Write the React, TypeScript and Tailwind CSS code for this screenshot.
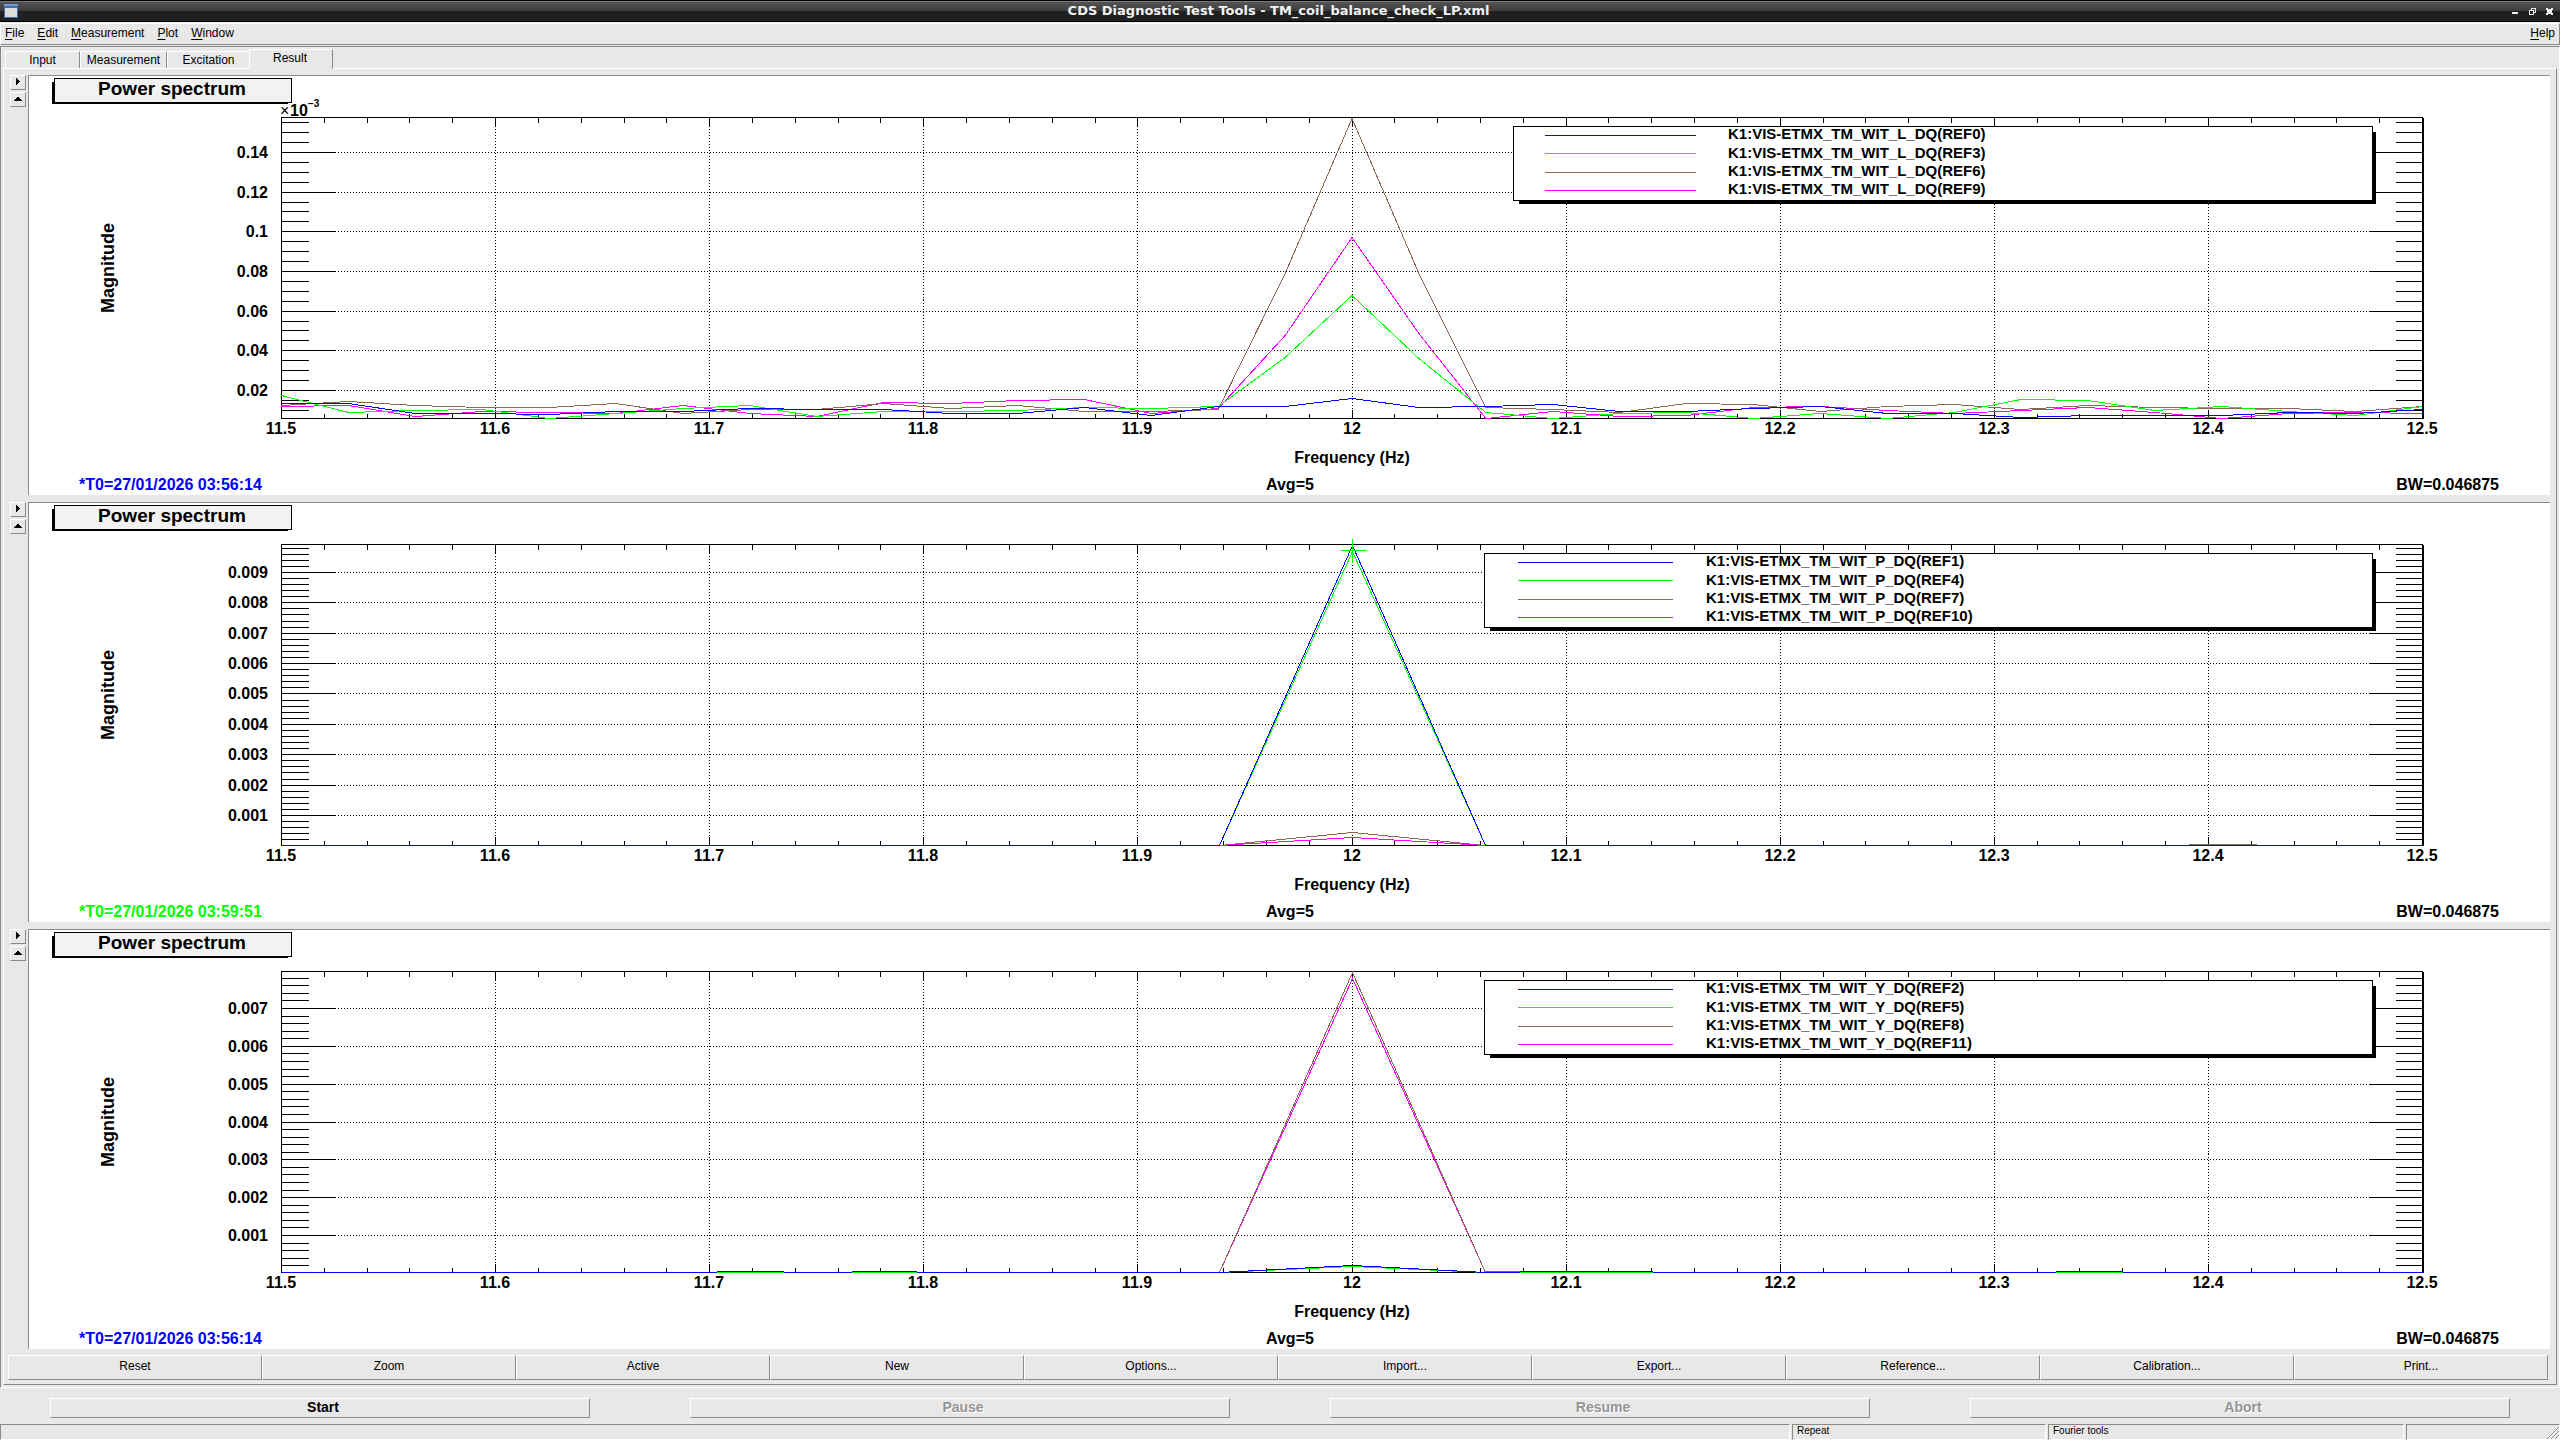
import React from "react";

type Series = { color: string; points: number[][] };

type Plot = {
  unit: string;
  first: number;
  step: number;
  minor: number;
  labels: string[];
  exponent?: boolean;
  t0: string;
  t0Class: string;
  legendX: number;
  lineX: number[];
  textX: number;
  legend: string[];
  series: Series[];
  marker?: number[];
};

const BLUE = "#0000ff";
const GREEN = "#00ff00";
const BROWN = "#8b6658";
const MAGENTA = "#ff00ff";
const COLORS = [BLUE, GREEN, BROWN, MAGENTA];

// Plot frame inside one pad
const LEFT = 253;
const RIGHT = 2394;
const TOP = 42;
const BOTTOM = 343;

// One reading for every frequency bin, 11.5 Hz to 12.5 Hz in steps of 1/32 Hz
const bins = (values: number[]) =>
  values.map((v, i) => [LEFT + ((RIGHT - LEFT) * i) / 32, v]);

// A single line at 12 Hz on a flat floor
const peak = (top: number, base = BOTTOM) => [
  [1191, base],
  [1324, top],
  [1457, base],
];

const floor = (from: number, to: number, y = BOTTOM) => [[from, y], [to, y]];

const plots: Plot[] = [
  {
    unit: "L",
    first: 315,
    step: 39.67,
    minor: 4,
    labels: ["0.02", "0.04", "0.06", "0.08", "0.1", "0.12", "0.14"],
    exponent: true,
    t0: "*T0=27/01/2026 03:56:14",
    t0Class: "fill-[#0000ff]",
    legendX: 1485,
    lineX: [1516, 1667],
    textX: 1700,
    legend: ["REF0", "REF3", "REF6", "REF9"],
    series: [
      {
        color: MAGENTA,
        points: bins([331, 330, 341, 336, 337, 338, 330, 338, 341, 327, 328, 325, 324, 338, 333, 260, 162, 258, 343,
          336, 341, 340, 332, 331, 335, 338, 335, 332, 337, 343, 338, 337, 338]),
      },
      {
        color: BROWN,
        points: bins([330, 326, 330, 332, 332, 328, 338, 334, 334, 328, 333, 330, 336, 336, 334, 198, 43, 198, 332,
          334, 337, 328, 329, 336, 331, 329, 334, 330, 332, 333, 333, 336, 331]),
      },
      {
        color: GREEN,
        points: bins([320, 337, 335, 334, 343, 338, 333, 330, 341, 336, 336, 335, 332, 333, 331, 282, 220, 283, 337,
          343, 338, 337, 343, 338, 343, 337, 324, 325, 335, 331, 336, 340, 331]),
      },
      {
        color: BLUE,
        points: bins([328, 328, 338, 338, 339, 336, 336, 333, 334, 334, 338, 338, 332, 340, 331, 331, 323, 332, 331,
          329, 336, 336, 333, 331, 338, 338, 342, 340, 340, 340, 337, 338, 334]),
      },
    ],
  },
  {
    unit: "P",
    first: 313,
    step: 30.38,
    minor: 5,
    labels: ["0.001", "0.002", "0.003", "0.004", "0.005", "0.006", "0.007", "0.008", "0.009"],
    t0: "*T0=27/01/2026 03:59:51",
    t0Class: "fill-[#00ff00]",
    legendX: 1456,
    lineX: [1489, 1644],
    textX: 1678,
    legend: ["REF1", "REF4", "REF7", "REF10"],
    series: [
      { color: BROWN, points: peak(330) },
      { color: MAGENTA, points: peak(335) },
      { color: BROWN, points: floor(2160, 2228, 342) },
      { color: GREEN, points: peak(49) },
      { color: BLUE, points: peak(43) },
      { color: BLUE, points: floor(LEFT, 1191) },
      { color: BLUE, points: floor(1457, RIGHT) },
    ],
    marker: [1324, 48],
  },
  {
    unit: "Y",
    first: 306,
    step: 37.83,
    minor: 5,
    labels: ["0.001", "0.002", "0.003", "0.004", "0.005", "0.006", "0.007"],
    t0: "*T0=27/01/2026 03:56:14",
    t0Class: "fill-[#0000ff]",
    legendX: 1456,
    lineX: [1489, 1644],
    textX: 1678,
    legend: ["REF2", "REF5", "REF8", "REF11"],
    series: [
      { color: MAGENTA, points: peak(49) },
      { color: BROWN, points: peak(43) },
      { color: MAGENTA, points: floor(1457, 1491, 342) },
      { color: GREEN, points: peak(337) },
      { color: BLUE, points: peak(336) },
      { color: BLUE, points: floor(LEFT, 1191) },
      { color: BLUE, points: floor(1447, RIGHT) },
      ...[[688, 755], [823, 888], [1491, 1624], [2027, 2094]].flatMap(([from, to]) => [
        { color: GREEN, points: floor(from, to) },
        { color: BLUE, points: floor(from, to, 342) },
      ]),
    ],
  },
];

const line = (x1: number, y1: number, x2: number, y2: number) => `M${x1} ${y1}L${x2} ${y2}`;

function Axes({ plot }: { plot: Plot }) {
  const ticks: string[] = [];
  const grid: string[] = [];

  for (let i = 1; i < 50; i++) {
    const x = Math.round(LEFT + ((RIGHT - LEFT) * i) / 50);
    const major = i % 5 === 0;
    const len = major ? 9 : 5;
    ticks.push(line(x, TOP, x, TOP + len), line(x, BOTTOM, x, BOTTOM - len));
    if (major) grid.push(line(x, TOP + 11, x, BOTTOM - 10));
  }

  for (let i = 1 - plot.minor; ; i++) {
    const y = Math.round(plot.first - (plot.step * i) / plot.minor);
    if (y <= TOP + 1) break;
    if (y >= BOTTOM - 1) continue;
    const major = i % plot.minor === 0;
    ticks.push(line(LEFT, y, LEFT + (major ? 54 : 27), y), line(RIGHT - (major ? 54 : 27), y, RIGHT, y));
    if (major) grid.push(line(LEFT + 56, y, RIGHT - 55, y));
  }

  return (
    <>
      <path d={grid.join("")} stroke="#000" strokeDasharray="1 2"/>
      <path d={ticks.join("")} stroke="#000"/>
      <rect x={LEFT} y={TOP} width={RIGHT - LEFT} height={BOTTOM - TOP} stroke="#000"/>
      <path d={line(RIGHT + 1, TOP, RIGHT + 1, BOTTOM)} stroke="#000"/>
    </>
  )
}

function Spectrum({ plot }: { plot: Plot }) {
  return (
    <svg className="block w-full h-auto bg-white font-bold text-[16px]" viewBox="1 1 2521 419" fill="none"
         xmlns="http://www.w3.org/2000/svg" role="img" aria-label="Power spectrum">
      <g transform="translate(.5 .5)" shapeRendering="crispEdges">
        <Axes plot={plot}/>
        {plot.series.map((s, i) => (
          <polyline key={i} points={s.points.map((p) => p.join(",")).join(" ")} stroke={s.color}/>
        ))}
        {plot.marker && (
          <path d={`M${plot.marker[0] - 12} ${plot.marker[1]}h25M${plot.marker[0]} ${plot.marker[1] - 12}v24`}
                stroke={GREEN}/>
        )}

        {/* Title box */}
        <rect x="23" y="6" width="236" height="22" fill="#000"/>
        <rect x="26" y="3" width="237" height="24" fill="#f2f2f2" stroke="#000"/>

        {/* Legend box */}
        <rect x={plot.legendX + 5} y="56" width={2342 - plot.legendX} height="72" fill="#000"/>
        <rect x={plot.legendX} y="51" width={2344 - plot.legendX} height="74" fill="#fff" stroke="#000"/>
        {COLORS.map((color, i) => (
          <path key={color} d={line(plot.lineX[0], [60, 78, 97, 115][i], plot.lineX[1], [60, 78, 97, 115][i])}
                stroke={color}/>
        ))}
      </g>

      <g className="fill-black">
        <text className="text-[19px]" x="144" y="20" textAnchor="middle">Power spectrum</text>
        {plot.legend.map((ref, i) => (
          <text key={ref} className="text-[15px]" x={plot.textX} y={[64, 83, 101, 119][i]}>
            {`K1:VIS-ETMX_TM_WIT_${plot.unit}_DQ(${ref})`}
          </text>
        ))}
        {plot.exponent && (
          <>
            <text className="font-normal" x="252" y="41">×</text>
            <text x="262" y="41">10</text>
            <text className="text-[10px]" x="280" y="32">−3</text>
          </>
        )}
        {plot.labels.map((label, i) => (
          <text key={label} x="240" y={Math.round(plot.first - plot.step * i) + 6} textAnchor="end">{label}</text>
        ))}
        {["11.5", "11.6", "11.7", "11.8", "11.9", "12", "12.1", "12.2", "12.3", "12.4", "12.5"].map((label, i) => (
          <text key={label} x={Math.round(LEFT + ((RIGHT - LEFT) * i) / 10)} y="359" textAnchor="middle">{label}</text>
        ))}
        <text className="text-[18px]" transform="translate(86 193) rotate(-90)" textAnchor="middle">Magnitude</text>
        <text x="1324" y="388" textAnchor="middle">Frequency (Hz)</text>
        <text x="1238" y="415">Avg=5</text>
        <text x="2471" y="415" textAnchor="end">BW=0.046875</text>
        <text className={plot.t0Class} x="51" y="415">{plot.t0}</text>
      </g>
    </svg>
  )
}

function PadButton({ label, d }: { label: string; d: string }) {
  return (
    <button type="button" aria-label={label}
            className="w-4 h-[15px] pb-px flex items-center justify-center border border-t-white border-l-white border-r-[#8a8a8a] border-b-[#8a8a8a]">
      <svg className="size-2" viewBox="0 0 8 8" fill="#000" shapeRendering="crispEdges">
        <path d={d}/>
      </svg>
    </button>
  )
}

const raised = "border border-t-white border-l-white border-r-[#8a8a8a] border-b-[#8a8a8a]";
const sunken = "border border-t-[#8a8a8a] border-l-[#8a8a8a] border-r-white border-b-white";

export default function App() {
  return (
    <div
      className="w-full bg-[#e8e8e8] font-['Liberation_Sans',Arial,sans-serif] text-[12px] leading-4 text-black overflow-hidden">
      {/* Title Bar */}
      <header
        className="h-[22px] flex items-center px-1 border-t border-b border-black bg-[linear-gradient(#7a7a7a_0px,#7a7a7a_1px,#545454_1px,#3c3c3c_10px,#202020_10px,#202020_20px)]">
        <div className="flex-1 flex">
          <svg className="w-[14px] h-[14px]" viewBox="0 0 14 14">
            <rect width="14" height="14" fill="#3d6db0"/>
            <rect width="14" height="2" fill="#6f9ad2"/>
            <rect x="1" y="4" width="12" height="9" fill="#dcdcd8"/>
          </svg>
        </div>
        <h1 className="pb-px font-['DejaVu_Sans',sans-serif] font-bold text-[13px] leading-5 text-[#f2f2f2]">
          CDS Diagnostic Test Tools - TM_coil_balance_check_LP.xml
        </h1>
        <div className="flex-1 flex justify-end gap-2.5 pr-[3px]">
          <button type="button" aria-label="Minimize">
            <svg className="size-[7px]" viewBox="0 0 7 7" shapeRendering="crispEdges">
              <path fill="#eee" d="M0 4h6v2H0z"/>
            </svg>
          </button>
          <button type="button" aria-label="Restore">
            <svg className="size-[7px]" viewBox="0 0 7 7" shapeRendering="crispEdges">
              <path fill="#eee" fillRule="evenodd" d="M2 0h5v5H5v2H0V2h2zM3 1v1h2v2h1V1zM1 3v3h3V3z"/>
            </svg>
          </button>
          <button type="button" aria-label="Close">
            <svg className="size-[7px]" viewBox="0 0 7 7" shapeRendering="crispEdges">
              <path fill="#eee" d="M0 0h2v1h3V0h2v2H6v3h1v2H5V6H2v1H0V5h1V2H0z"/>
            </svg>
          </button>
        </div>
      </header>

      {/* Menu Bar */}
      <nav className={`mt-px h-[22px] flex items-center gap-px pr-1 pb-0.5 ${raised}`}>
        {["File", "Edit", "Measurement", "Plot", "Window", "Help"].map((item) => (
          <button key={item} type="button" className="px-1.5 first:pl-1 last:pr-0 last:ml-auto">
            <span className="underline underline-offset-2">{item[0]}</span>{item.slice(1)}
          </button>
        ))}
      </nav>

      <main className={`mt-px pl-0.5 pr-0.5 pb-0.5 ${sunken}`}>
        {/* Tabs */}
        <div className="h-[21px] flex items-end pl-0.5" role="tablist">
          <button type="button" role="tab" aria-selected="false"
                  className="w-[75px] h-[17px] pb-0.5 leading-4 border-t border-l border-white border-r border-r-[#8a8a8a]">Input
          </button>
          <button type="button" role="tab" aria-selected="false"
                  className="w-[87px] h-[17px] pb-0.5 leading-4 border-t border-l border-white border-r border-r-[#8a8a8a]">Measurement
          </button>
          <button type="button" role="tab" aria-selected="false"
                  className="w-[82px] h-[17px] pb-0.5 leading-4 border-t border-l border-white">Excitation
          </button>
          <button type="button" role="tab" aria-selected="true"
                  className="relative w-[84px] h-5 -mb-px pr-0.5 pb-1.5 leading-4 bg-[#e8e8e8] border-t border-l border-white border-r border-r-[#8a8a8a]">Result
          </button>
        </div>

        <div className={`pt-1.5 pb-1 ${raised}`} role="tabpanel">
          <div className="flex flex-col gap-[7px] px-1.5">
            {plots.map((plot) => (
              <section key={plot.unit} className="flex items-start gap-0.5">
                <div className="flex flex-col gap-0.5">
                  <PadButton label="Show options" d="M2 0h1v1h1v1h1v1h1v1H5v1H4v1H3v1H2z"/>
                  <PadButton label="Maximize pad" d="M3 2h2v1h1v1h1v1h1v1H0V5h1V4h1V3h1z"/>
                </div>
                <div className="flex-1 min-w-0 border-t border-l border-[#8a8a8a]">
                  <Spectrum plot={plot}/>
                </div>
              </section>
            ))}
          </div>

          {/* Toolbar */}
          <div className="mt-1.5 ml-1 mr-2 grid grid-cols-10">
            {["Reset", "Zoom", "Active", "New", "Options...", "Import...", "Export...", "Reference...", "Calibration...", "Print..."].map((item) => (
              <button key={item} type="button" className={`h-[25px] pb-1 ${raised}`}>{item}</button>
            ))}
          </div>
        </div>
      </main>

      {/* Run controls */}
      <div className="grid grid-cols-4 pt-2.5 pb-1.5 text-[14px] font-bold">
        {["Start", "Pause", "Resume", "Abort"].map((item) => (
          <div key={item} className="px-[50px]">
            <button type="button" disabled={item !== "Start"}
                    className={`block w-full h-5 pl-1.5 pb-1.5 disabled:text-[#959595] disabled:[text-shadow:1px_1px_#fff] ${raised}`}>
              {item}
            </button>
          </div>
        ))}
      </div>

      {/* Status Bar */}
      <footer className="h-4 grid grid-cols-[70fr_10fr_14fr_6fr] text-[10px] leading-3">
        <div className={`mr-0.5 ${sunken}`}/>
        <div className={`mr-0.5 pl-1 ${sunken}`}>Repeat</div>
        <div className={`mr-0.5 pl-1 ${sunken}`}>Fourier tools</div>
        <div className={`flex items-end justify-end ${sunken}`}>
          <svg className="size-3" viewBox="0 0 12 12" stroke="#8a8a8a">
            <path d="M0 12 12 0M4 12l8-8M8 12l4-4"/>
            <path stroke="#fff" d="M1 12 12 1M5 12l7-7M9 12l3-3"/>
          </svg>
        </div>
      </footer>
    </div>
  )
}
